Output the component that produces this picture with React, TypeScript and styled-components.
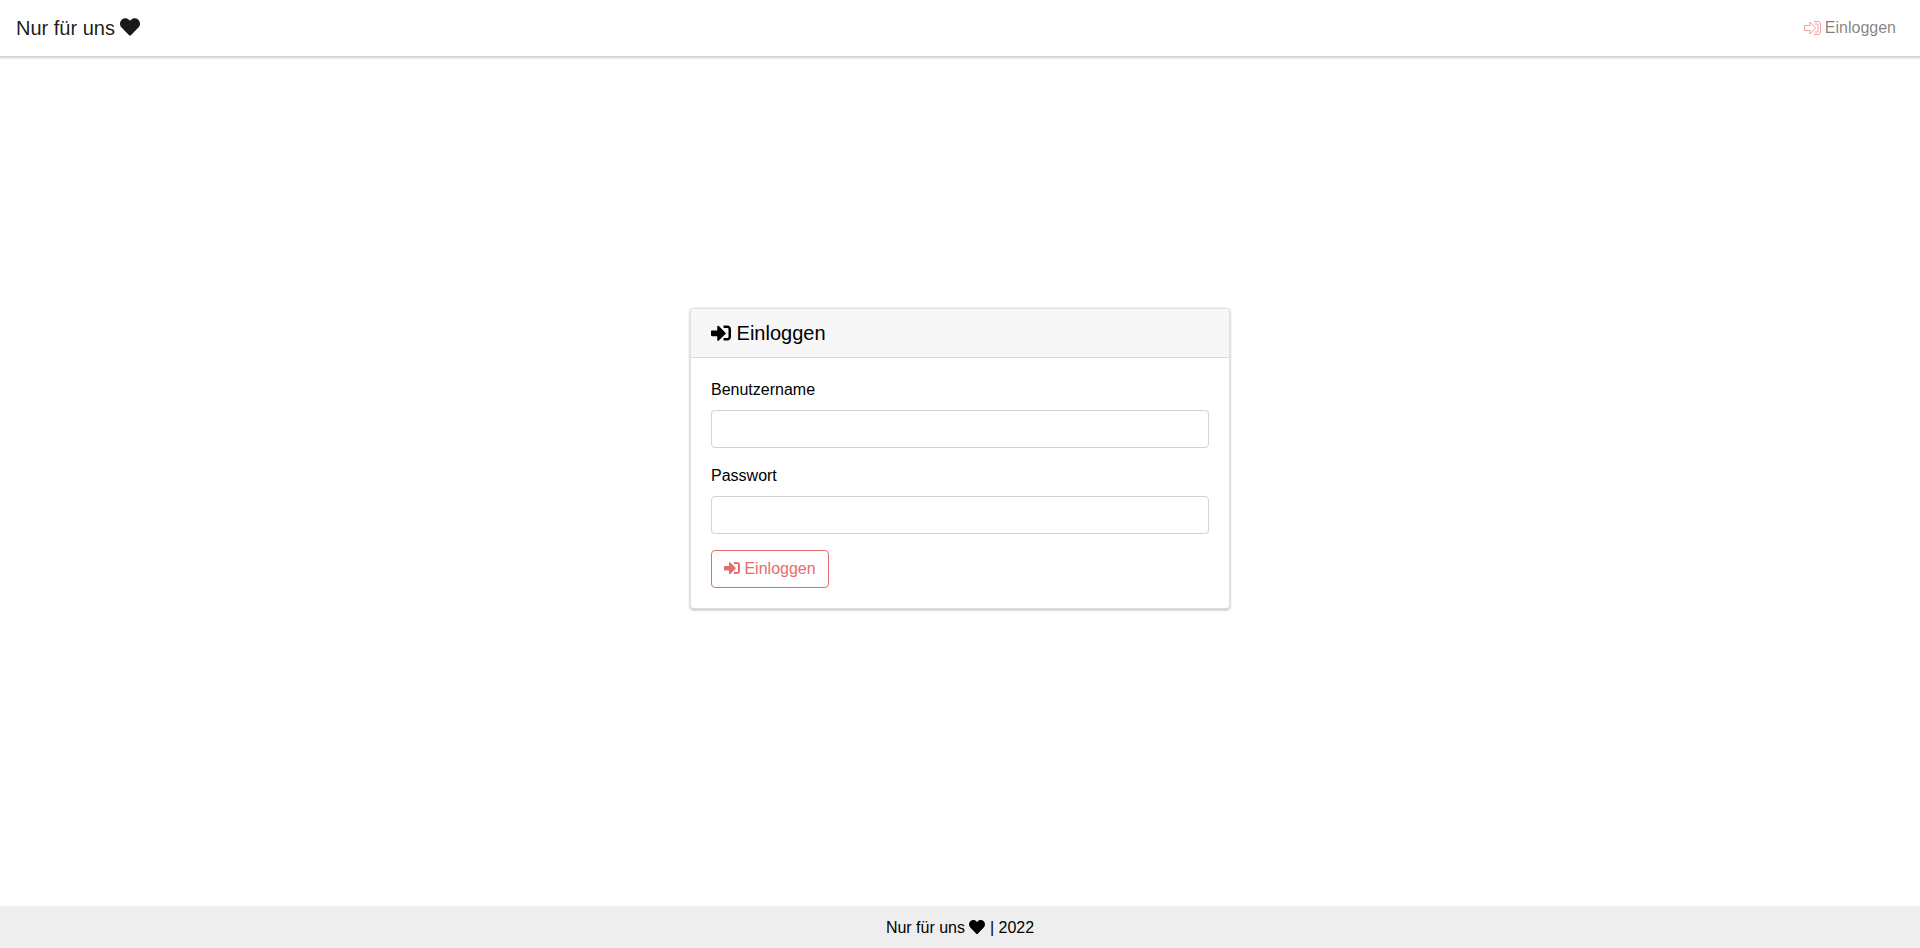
import React from 'react';
import styled, {createGlobalStyle} from 'styled-components';
import {FaHeart, FaSignInAlt} from 'react-icons/fa';

const GlobalStyle = createGlobalStyle`
	* {
		box-sizing: border-box;
	}
	html,
	body {
		margin: 0;
		padding: 0;
	}
	body {
		font-family: 'Liberation Sans', Arial, sans-serif;
		font-size: 16px;
		line-height: 1.5;
		color: #000;
		background: #fff;
	}
`;

export default function App() {
	return (
		<Page>
			<GlobalStyle />
			<Navbar>
				<Brand>
					Nur für uns <FaHeart />
				</Brand>
				<NavLink>
					<OutlineIcon viewBox="0 0 17 14">
						<path d="M.5 4.5H6V1.2L11.5 7 6 12.8V9.5H.5Z" />
						<path d="M10 .5h4a2.5 2.5 0 0 1 2.5 2.5v8a2.5 2.5 0 0 1-2.5 2.5h-4" />
						<path d="M10.5 3h3a.5.5 0 0 1 .5.5v7a.5.5 0 0 1-.5.5h-3" />
					</OutlineIcon>
					Einloggen
				</NavLink>
			</Navbar>
			<Main>
				<Card>
					<CardHeader>
						<FaSignInAlt /> Einloggen
					</CardHeader>
					<CardBody>
						<FormGroup>
							<Label htmlFor="username">Benutzername</Label>
							<Input id="username" type="text" />
						</FormGroup>
						<FormGroup>
							<Label htmlFor="password">Passwort</Label>
							<Input id="password" type="password" />
						</FormGroup>
						<SubmitButton type="submit">
							<FaSignInAlt /> Einloggen
						</SubmitButton>
					</CardBody>
				</Card>
			</Main>
			<Footer>
				Nur für uns <FaHeart /> | 2022
			</Footer>
		</Page>
	);
}

const Page = styled.div`
	display: flex;
	flex-direction: column;
	height: 948px;
	overflow: hidden;
`;

const Navbar = styled.nav`
	display: flex;
	flex: none;
	align-items: center;
	justify-content: space-between;
	height: 57px;
	padding: 0 16px;
	background: #fff;
	border-bottom: 1px solid #d4d4d4;
	box-shadow: 0 1px 2px rgba(0, 0, 0, 0.2);
`;

const Brand = styled.a`
	font-size: 20px;
	line-height: 30px;
	color: rgba(0, 0, 0, 0.9);
	svg {
		width: 20px;
		height: 20px;
		vertical-align: -2px;
	}
`;

const NavLink = styled.a`
	display: flex;
	align-items: center;
	padding: 0 8px;
	color: rgba(0, 0, 0, 0.5);
`;

const OutlineIcon = styled.svg`
	width: 17px;
	height: 14px;
	margin-right: 4px;
	fill: none;
	stroke: #f29c9c;
	stroke-width: 1;
`;

const Main = styled.main`
	display: flex;
	flex: 1;
	align-items: center;
	justify-content: center;
	padding-bottom: 46px;
`;

const Card = styled.section`
	width: 540px;
	background: #fff;
	border: 1px solid rgba(0, 0, 0, 0.125);
	border-radius: 4px;
	box-shadow: 0 1px 3px rgba(0, 0, 0, 0.3);
`;

const CardHeader = styled.h5`
	margin: 0;
	padding: 12px 20px;
	font-size: 20px;
	font-weight: 400;
	line-height: 24px;
	background: #f7f7f7;
	border-bottom: 1px solid rgba(0, 0, 0, 0.125);
	border-radius: 3px 3px 0 0;
	svg {
		width: 20px;
		height: 20px;
		vertical-align: -3px;
	}
`;

const CardBody = styled.form`
	display: flex;
	flex-direction: column;
	align-items: flex-start;
	padding: 20px;
`;

const FormGroup = styled.div`
	width: 100%;
	margin-bottom: 16px;
`;

const Label = styled.label`
	display: block;
	margin-bottom: 8px;
`;

const Input = styled.input`
	display: block;
	width: 100%;
	height: 38px;
	padding: 6px 12px;
	font: inherit;
	background: #fff;
	border: 1px solid #ced4da;
	border-radius: 4px;
`;

const SubmitButton = styled.button`
	height: 38px;
	padding: 6px 12px;
	font: inherit;
	color: #e76c6c;
	background: transparent;
	border: 1px solid #e76c6c;
	border-radius: 4px;
	svg {
		width: 16px;
		height: 16px;
		vertical-align: -2px;
	}
`;

const Footer = styled.footer`
	flex: none;
	height: 42px;
	padding: 10px 0 8px;
	line-height: 24px;
	text-align: center;
	background: #eee;
	svg {
		width: 16px;
		height: 16px;
		vertical-align: -2px;
	}
`;
